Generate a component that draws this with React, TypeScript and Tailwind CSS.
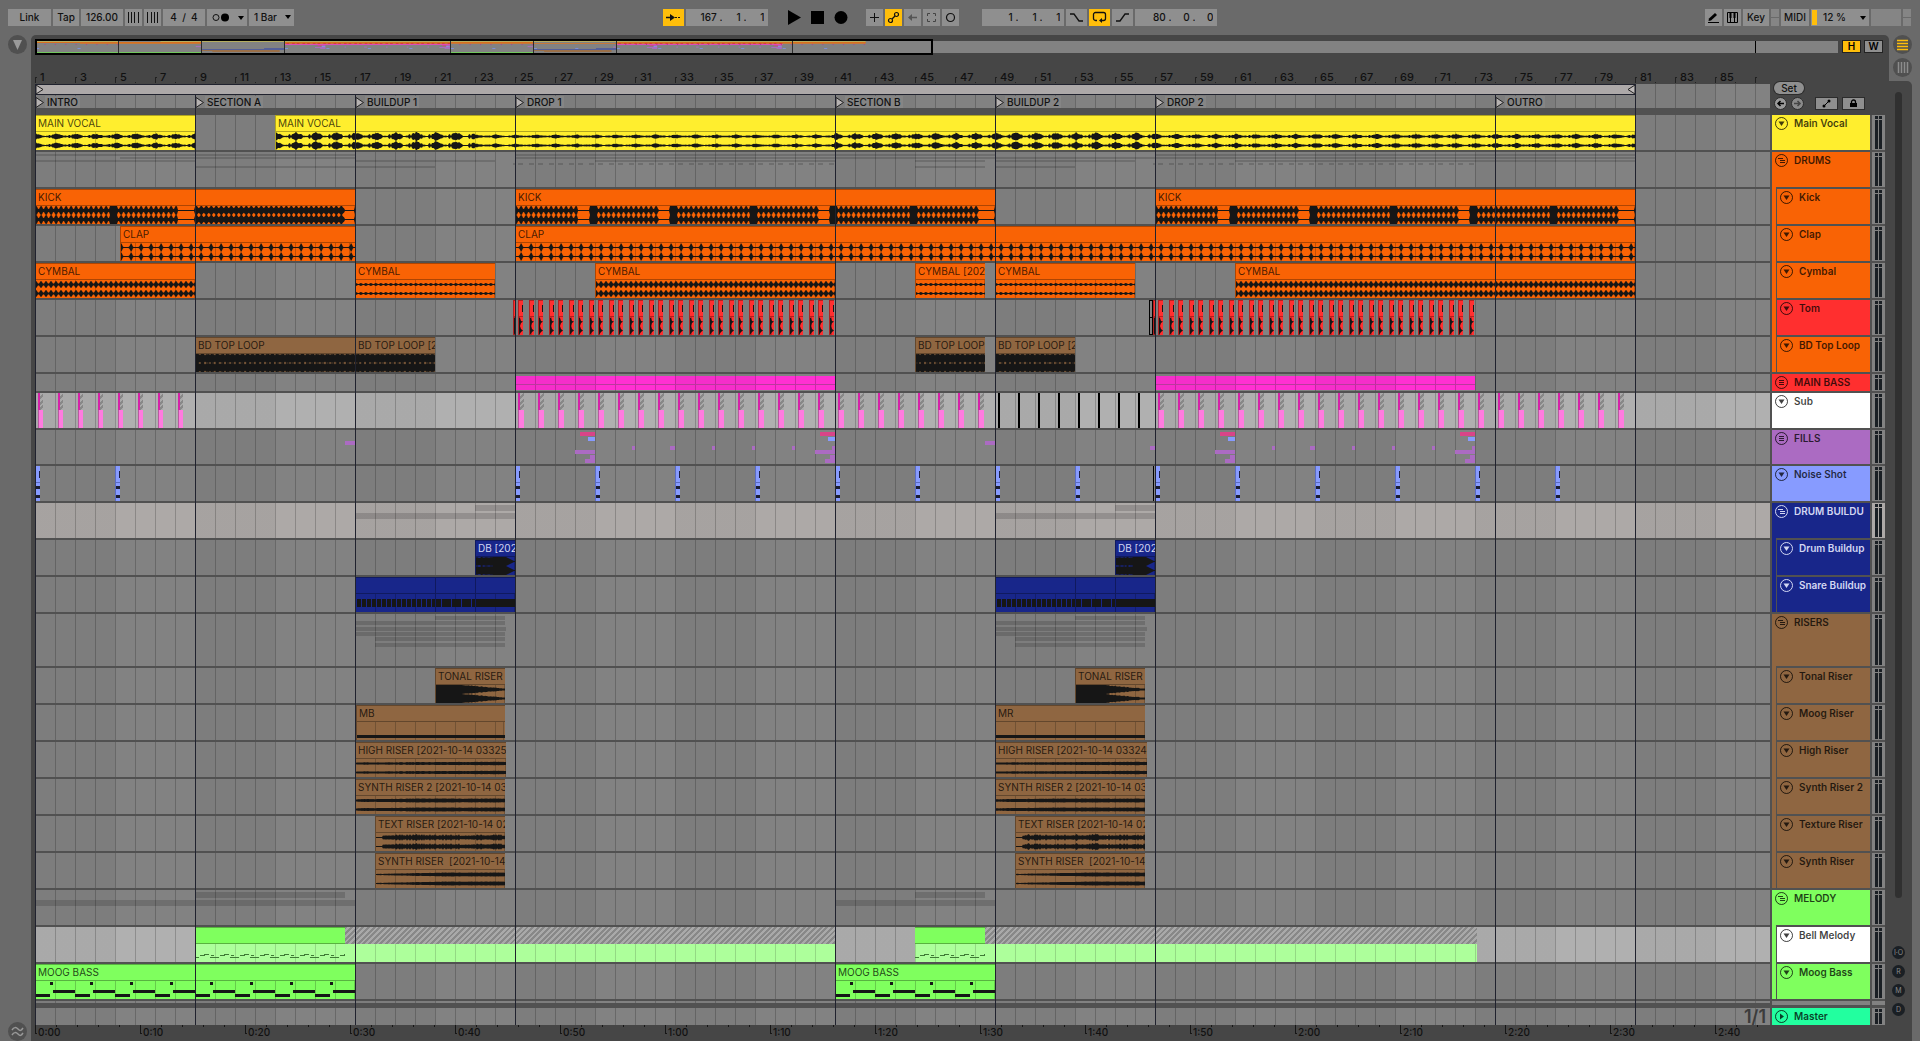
import { useState } from 'react';
import type { ReactNode } from 'react';

const BAR = 20;
const SCALE = 0.5185;

type Span = [number, number];
type WaveKind = 'vocal' | 'kick' | 'clap' | 'cymbal' | 'hat' | 'loop' | 'drop' | 'tonal' | 'high' | 'synth2' | 'texture' | 'synth';

interface ClipData {
  x: number;
  w: number;
  label?: string;
}

interface Track {
  name: string;
  height: string;
  color: string;
  lane?: string;
  text?: string;
  icon?: 'fold' | 'group' | 'flat';
  content?: ReactNode;
}

interface Section {
  head: Track;
  children?: Track[];
}

const GRID =
  'bg-[repeating-linear-gradient(90deg,rgba(0,0,0,0.2)_0_1px,transparent_1px_20px),repeating-linear-gradient(90deg,rgba(0,0,0,0.04)_0_80px,transparent_80px_160px)]';

const range = (n: number) => Array.from({ length: n }, (_, i) => i);

/* Clip positions, in pixels from bar 1 */
const vocal: ClipData[] = [
  { x: 0, w: 160, label: 'MAIN VOCAL' },
  { x: 240, w: 1360, label: 'MAIN VOCAL' }
];
const kick: ClipData[] = [
  { x: 0, w: 320, label: 'KICK' },
  { x: 480, w: 480, label: 'KICK' },
  { x: 1120, w: 480, label: 'KICK' }
];
const clap: ClipData[] = [
  { x: 85, w: 235, label: 'CLAP' },
  { x: 480, w: 1120, label: 'CLAP' }
];
const cymbal: ClipData[] = [
  { x: 0, w: 160, label: 'CYMBAL' },
  { x: 560, w: 240, label: 'CYMBAL' },
  { x: 1200, w: 400, label: 'CYMBAL' }
];
const hat: ClipData[] = [
  { x: 320, w: 140, label: 'CYMBAL' },
  { x: 880, w: 70, label: 'CYMBAL [2021' },
  { x: 960, w: 140, label: 'CYMBAL' }
];
const loops: ClipData[] = [
  { x: 160, w: 160, label: 'BD TOP LOOP' },
  { x: 320, w: 80, label: 'BD TOP LOOP [20' },
  { x: 880, w: 70, label: 'BD TOP LOOP' },
  { x: 960, w: 80, label: 'BD TOP LOOP [20' }
];
const toms: ClipData[] = [478, 1118].flatMap((start) => [
  { x: start, w: 2 },
  ...range(16).flatMap((i) => [
    { x: start + 5 + i * BAR, w: 5 },
    { x: start + 16 + i * BAR, w: 5 }
  ])
]);
const subs: ClipData[] = [
  ...range(8).map((i) => ({ x: 3 + i * BAR, w: 5 })),
  ...range(24).map((i) => ({ x: 483 + i * BAR, w: 6 })),
  ...range(24).map((i) => ({ x: 1123 + i * BAR, w: 6 }))
];
const noise = [0, 80, ...range(14).map((i) => 480 + i * 80)];

const twice = (clips: ClipData[]) => [...clips, ...clips.map((c) => ({ ...c, x: c.x + 640 }))];
const drumDrop = twice([{ x: 440, w: 40, label: 'DB [202' }]);
const snare = twice([{ x: 320, w: 160 }]);
const tonal = twice([{ x: 400, w: 70, label: 'TONAL RISER [' }]);
const moogRiser: ClipData[] = [
  { x: 321, w: 149, label: 'MB' },
  { x: 960, w: 150, label: 'MR' }
];
const high: ClipData[] = [
  { x: 320, w: 151, label: 'HIGH RISER [2021-10-14 03325' },
  { x: 960, w: 152, label: 'HIGH RISER [2021-10-14 03324' }
];
const synth2 = twice([{ x: 320, w: 150, label: 'SYNTH RISER 2 [2021-10-14 03' }]);
const texture = twice([{ x: 340, w: 130, label: 'TEXT RISER [2021-10-14 02' }]);
const synth = twice([{ x: 340, w: 130, label: 'SYNTH RISER  [2021-10-14' }]);
const bell: ClipData[] = [
  { x: 160, w: 150 },
  { x: 880, w: 70 }
];
const moog: ClipData[] = [
  { x: 0, w: 320, label: 'MOOG BASS' },
  { x: 800, w: 160, label: 'MOOG BASS' }
];

/* y, colour, x and width of every note block in the FILLS group */
const fills: [number, string, number, number][] = [
  [11, '#ab6bc2', 310, 10],
  [11, '#ab6bc2', 950, 10],
  [16, '#ab6bc2', 1115, 5],
  ...[0, 640].flatMap((o): [number, string, number, number][] => [
    [2, '#d94488', 545 + o, 15],
    [7, '#879bff', 553 + o, 7],
    [20, '#ab6bc2', 540 + o, 20],
    [25, '#ab6bc2', 555 + o, 5],
    [29, '#ab6bc2', 550 + o, 10],
    [16, '#ab6bc2', 597 + o, 3],
    [16, '#ab6bc2', 635 + o, 5],
    [16, '#ab6bc2', 677 + o, 3],
    [16, '#ab6bc2', 717 + o, 3],
    [16, '#ab6bc2', 757 + o, 3],
    [2, '#d94488', 785 + o, 15],
    [7, '#879bff', 793 + o, 7],
    [16, '#ab6bc2', 797 + o, 3],
    [20, '#ab6bc2', 780 + o, 20],
    [25, '#ab6bc2', 795 + o, 5],
    [29, '#ab6bc2', 790 + o, 10]
  ])
];

const locators = [
  { x: 0, name: 'INTRO' },
  { x: 160, name: 'SECTION A' },
  { x: 320, name: 'BUILDUP 1' },
  { x: 480, name: 'DROP 1' },
  { x: 800, name: 'SECTION B' },
  { x: 960, name: 'BUILDUP 2' },
  { x: 1120, name: 'DROP 2' },
  { x: 1460, name: 'OUTRO' }
];

const inside = (x: number, spans: Span[]) => spans.some(([a, b]) => x >= a && x < b);
const KICK_REST: Span[] = [[143, 160], [310, 320], [543, 555], [624, 635], [784, 795], [944, 960], [1183, 1195], [1264, 1275], [1424, 1435], [1584, 1600]];
const KICK_ROLL: Span[] = [[75, 83], [555, 563], [635, 643], [715, 723], [795, 803], [875, 883], [1195, 1203], [1275, 1283], [1355, 1363], [1435, 1443], [1515, 1523]];

const jitter = (x: number) => Math.abs(Math.sin(x * 12.9898) * 43758.5453) % 1;

function amplitude(kind: WaveKind, x: number, t: number) {
  switch (kind) {
    case 'vocal': {
      const p = (x + 6) % 20;
      const strength = x < 160 ? 3.2 : x < 440 ? 4.6 : x < 800 ? 2.2 : x < 960 ? 3.6 : x < 1120 ? 4.2 : 2.8;
      if (p < 2) return strength * 0.5;
      if (p < 3) return 0.6;
      if (p < 14) return Math.max(0.6, strength * (1 - Math.abs(p - 7) / 11) * (0.65 + jitter(x) * 0.4));
      return 0.5 + jitter(x) * 0.5;
    }
    case 'kick': {
      if (inside(x, KICK_REST)) return 0.5;
      if (inside(x, KICK_ROLL)) return 4.4;
      return (x >= 160 && x < 320 ? [3.8, 4.6, 4.4, 3, 2.2] : [3.6, 4.6, 4, 1.8, 1.4])[x % 5];
    }
    case 'clap':
      return [2.2, 4.5, 3, 0.7, 0.5, 0.5, 0.5, 0.5, 0.5, 0.7][(x + 5) % 10];
    case 'cymbal':
      return [1, 2.4, 3.8, 2.6, 1][(x + 1) % 5];
    case 'hat':
      return [0.5, 1.2, 1.6, 1, 0.5][(x + 1) % 5];
    case 'loop':
      return x % 10 === 0 ? 3 : x % 5 === 0 ? 3.5 : 4.2 + jitter(x) * 0.4;
    case 'drop':
      return t < 0.45 ? 3.6 + jitter(x) : t < 0.8 ? 4.6 : Math.max(0.5, (1 - t) * 20);
    case 'tonal':
      return t < 0.35 ? 4.5 : Math.max(0.9, 4.5 - (t - 0.35) * 6.5 + jitter(x) * 0.8);
    case 'high':
      return 0.8 + t * 0.7 + jitter(x) * 0.4;
    case 'synth2':
      return 1 + Math.min(t, 0.4) * 1.6 + jitter(x) * 0.4;
    case 'texture':
      return t < 0.06 ? 0.6 : 1.6 + (jitter(x) > 0.8 ? 1.6 : jitter(x + 3) * 0.8);
    default:
      return Math.min(1.7, 0.4 + t * 2.4) + jitter(x) * 0.3;
  }
}

function wavePath(kind: WaveKind, x: number, w: number) {
  return [4.5, 13.5]
    .map((mid) => {
      const amps = range(w + 1).map((i) => amplitude(kind, x + i, i / w));
      const top = amps.map((a, i) => `${i} ${(mid - a).toFixed(1)}`);
      const bottom = amps.map((a, i) => `${i} ${(mid + a).toFixed(1)}`).reverse();
      return `M${top.join('L')}L${bottom.join('L')}Z`;
    })
    .join('');
}

function Clip({ clip, color, text = 'text-black/75', children }: { clip: ClipData; color: string; text?: string; children?: ReactNode }) {
  return (
    <div
      className={`absolute inset-y-0 flex flex-col overflow-hidden border-l border-black/30 ${color}`}
      style={{ left: clip.x, width: clip.w }}
    >
      <div className={`h-[17px] shrink-0 overflow-hidden whitespace-pre border-y border-black/30 pl-[2px] text-[10px] leading-[15px] ${text}`}>
        {clip.label}
      </div>
      <div
        className="flex-1 bg-[repeating-linear-gradient(90deg,rgba(0,0,0,0.2)_0_1px,transparent_1px_20px)]"
        style={{ backgroundPositionX: -(clip.x % BAR) - 1 }}
      >
        {children}
      </div>
    </div>
  );
}

function Audio({ clips, wave, color, text }: { clips: ClipData[]; wave: WaveKind; color: string; text?: string }) {
  return (
    <>
      {clips.map((c) => (
        <Clip key={c.x} clip={c} color={color} text={text}>
          <svg width={c.w} height="18" className="-ml-px block">
            <path d={wavePath(wave, c.x, c.w)} fill="#161616" />
          </svg>
        </Clip>
      ))}
    </>
  );
}

function Toms() {
  return (
    <>
      {toms.map((c) => (
        <Clip key={c.x} clip={c} color="bg-[#ff2f2f]">
          <svg width={c.w} height="18" className="-ml-px block">
            <path d="M0 0L2 1 3 4 5 4.5 3 6 2 9 3 12 5 13.5 3 15 1 18H0z" fill="#161616" />
          </svg>
        </Clip>
      ))}
      {toms.filter((c) => c.w > 2).map((c) => (
        <div key={c.x} className="absolute top-[5px] h-[7px] w-px bg-[#161616]" style={{ left: c.x + 4 }} />
      ))}
      <div className="absolute inset-y-0 left-[1114px] w-1 border border-black">
        <div className="mt-4 h-px bg-black" />
      </div>
    </>
  );
}

function Hatch({ x, w }: { x: number; w: number }) {
  return (
    <div
      className="absolute top-0 h-[17px] bg-[repeating-linear-gradient(135deg,#888_0_2px,#a9a9a9_2px_4px)]"
      style={{ left: x, width: w }}
    />
  );
}

function Subs() {
  return (
    <>
      {subs.map((c) => (
        <div key={c.x} className="absolute inset-y-0" style={{ left: c.x, width: c.w }}>
          <Hatch x={0} w={c.w} />
          <div className="absolute left-0 top-0 h-[17px] w-[2px] bg-[#d422a8]" />
          <div className="absolute inset-x-0 bottom-0 top-[17px] border-l border-[#b85aa0] bg-[#ff7bdf]" />
        </div>
      ))}
      {range(8).map((i) => (
        <div key={i} className="absolute inset-y-0 w-[2px] bg-black" style={{ left: 963 + i * BAR }} />
      ))}
    </>
  );
}

function NoiseShots() {
  return (
    <>
      {noise.map((x) => (
        <div key={x} className="absolute inset-y-0 w-[5px] border-l border-[#5a6bc0] bg-[#879bff]" style={{ left: x }}>
          <div className="ml-[3px] mt-[5px] h-[7px] w-px bg-[#1c2040]" />
          <div className="mt-1 h-px bg-[#5a6bc0]" />
          <div className="mt-[3px] h-[3px] bg-[#1a1d30]" />
          <div className="mt-[6px] h-[3px] bg-[#1a1d30]" />
        </div>
      ))}
      <div className="absolute inset-y-0 left-[1118px] w-px bg-black" />
    </>
  );
}

function MainBass() {
  return (
    <>
      {[480, 1120].map((x) => (
        <div key={x} className="absolute bottom-px top-[2px] w-[320px] bg-[#ff30d2]" style={{ left: x }}>
          <div className={`h-full ${GRID}`} />
          <div className="absolute inset-x-0 top-[8px] h-px bg-[#b93a9c]" />
        </div>
      ))}
    </>
  );
}

function Fills() {
  return (
    <>
      {fills.map(([y, color, x, w]) => (
        <div key={`${x}-${y}`} className="absolute h-[4px]" style={{ left: x, top: y, width: w, background: color }} />
      ))}
    </>
  );
}

function Snare() {
  return (
    <>
      {snare.map((c) => (
        <Clip key={c.x} clip={c} color="bg-[#18268a]">
          <svg width="160" height="18" className="-ml-px block">
            <rect x="1" y="5" width="159" height="8" fill="#161616" />
            {range(16).map((i) => (
              <path key={i} d={`M${1 + i * 5}.5 5v8`} stroke="#18268a" />
            ))}
            {range(4).map((i) => (
              <path key={i} d={`M${86 + i * 10}.5 5v8`} stroke="#18268a" />
            ))}
          </svg>
        </Clip>
      ))}
      {[400, 440, 1040, 1080].map((x) => (
        <div key={x} className="absolute inset-y-0 w-px bg-[#10195e]" style={{ left: x }} />
      ))}
    </>
  );
}

function MoogRisers() {
  return (
    <>
      {moogRiser.map((c) => (
        <Clip key={c.x} clip={c} color="bg-[#8f6641]">
          <div className="flex h-full items-end pb-[2px]">
            <div className="h-[3px] w-full bg-[#161616]" />
          </div>
        </Clip>
      ))}
    </>
  );
}

function BellMelody() {
  return (
    <>
      <Hatch x={310} w={490} />
      <Hatch x={950} w={492} />
      {[[160, 640], [880, 562]].map(([x, w]) => (
        <div key={x} className="absolute bottom-0 top-[17px] bg-[#adff9b]" style={{ left: x, width: w }}>
          <div className="h-full bg-[repeating-linear-gradient(90deg,rgba(0,0,0,0.15)_0_1px,transparent_1px_20px)]" />
        </div>
      ))}
      {bell.map((c) => (
        <div key={c.x} className="absolute inset-y-0" style={{ left: c.x, width: c.w }}>
          <div className="h-[17px] border-y border-[#58b23f] bg-[#7fff5e]" />
          <svg width={c.w} height="18" className="block">
            {range(Math.ceil(c.w / 20)).map((i) => (
              <path key={i} d={`M${i * 20} 13.5h4m1-2h5m0-1h4m1 3h5m-11 -3h4m3 1h3`} stroke="#3f7a35" fill="none" />
            ))}
          </svg>
        </div>
      ))}
    </>
  );
}

function MoogBass() {
  return (
    <>
      {moog.map((c) => (
        <Clip key={c.x} clip={c} color="bg-[#7fff5e]">
          <svg width={c.w} height="18" className="-ml-px block" fill="#161616">
            {range(c.w / 40).map((i) => (
              <path key={i} d={`M${i * 40} 13h15v3h-15zM${i * 40 + 15} 1h3v3h-3zM${i * 40 + 18} 9h22v3h-22z`} />
            ))}
          </svg>
        </Clip>
      ))}
    </>
  );
}

/* Grey summary of the clips folded into a group lane */
function GroupBars({ rows, pitch, size }: { rows: ClipData[][]; pitch: number; size: number }) {
  return (
    <>
      {rows.map((clips, r) =>
        clips.map((c) => (
          <div
            key={`${r}-${c.x}`}
            className="absolute bg-black/15"
            style={{ left: c.x, width: c.w, top: 2 + Math.round(r * pitch), height: size }}
          />
        ))
      )}
    </>
  );
}

const ORANGE = 'bg-[#f96305]';
const BROWN = 'bg-[#8f6641]';
const NAVY = 'bg-[#18268a]';
const GREEN = 'bg-[#7fff5e]';
const NAVY_TEXT = 'text-[#d3d7f2]';
const H = 'h-[35px]';

const sections: Section[] = [
  { head: { name: 'Main Vocal', height: H, color: 'bg-[#ffee2e]', content: <Audio clips={vocal} wave="vocal" color="bg-[#ffee2e]" /> } },
  {
    head: { name: 'DRUMS', height: H, color: ORANGE, icon: 'group', content: <GroupBars rows={[kick, clap, [...cymbal, ...hat], toms, loops]} pitch={3} size={2} /> },
    children: [
      { name: 'Kick', height: H, color: ORANGE, content: <Audio clips={kick} wave="kick" color={ORANGE} /> },
      { name: 'Clap', height: H, color: ORANGE, content: <Audio clips={clap} wave="clap" color={ORANGE} /> },
      {
        name: 'Cymbal',
        height: H,
        color: ORANGE,
        content: (
          <>
            <Audio clips={cymbal} wave="cymbal" color={ORANGE} />
            <Audio clips={hat} wave="hat" color={ORANGE} />
          </>
        )
      },
      { name: 'Tom', height: H, color: 'bg-[#ff2f2f]', content: <Toms /> },
      { name: 'BD Top Loop', height: H, color: ORANGE, content: <Audio clips={loops} wave="loop" color={BROWN} /> }
    ]
  },
  { head: { name: 'MAIN BASS', height: 'h-[17px]', color: 'bg-[#ff2f2f]', icon: 'flat', content: <MainBass /> } },
  { head: { name: 'Sub', height: H, color: 'bg-white', lane: 'bg-[#b0b0b0]', content: <Subs /> } },
  { head: { name: 'FILLS', height: 'h-[34px]', color: 'bg-[#ab6bc2]', icon: 'flat', content: <Fills /> } },
  { head: { name: 'Noise Shot', height: H, color: 'bg-[#879bff]', content: <NoiseShots /> } },
  {
    head: { name: 'DRUM BUILDU', height: H, color: NAVY, lane: 'bg-[#ada9a7]', text: NAVY_TEXT, icon: 'group', content: <GroupBars rows={[drumDrop, snare]} pitch={8} size={6} /> },
    children: [
      { name: 'Drum Buildup', height: H, color: NAVY, text: NAVY_TEXT, content: <Audio clips={drumDrop} wave="drop" color={NAVY} text={NAVY_TEXT} /> },
      { name: 'Snare Buildup', height: H, color: NAVY, text: NAVY_TEXT, content: <Snare /> }
    ]
  },
  {
    head: { name: 'RISERS', height: 'h-[52px]', color: BROWN, icon: 'group', content: <GroupBars rows={[tonal, moogRiser, high, synth2, texture, synth]} pitch={5.3} size={4} /> },
    children: [
      { name: 'Tonal Riser', height: H, color: BROWN, content: <Audio clips={tonal} wave="tonal" color={BROWN} /> },
      { name: 'Moog Riser', height: H, color: BROWN, content: <MoogRisers /> },
      { name: 'High Riser', height: H, color: BROWN, content: <Audio clips={high} wave="high" color={BROWN} /> },
      { name: 'Synth Riser 2', height: H, color: BROWN, content: <Audio clips={synth2} wave="synth2" color={BROWN} /> },
      { name: 'Texture Riser', height: H, color: BROWN, content: <Audio clips={texture} wave="texture" color={BROWN} /> },
      { name: 'Synth Riser', height: H, color: BROWN, content: <Audio clips={synth} wave="synth" color={BROWN} /> }
    ]
  },
  {
    head: { name: 'MELODY', height: H, color: GREEN, icon: 'group', content: <GroupBars rows={[bell, moog]} pitch={8} size={6} /> },
    children: [
      { name: 'Bell Melody', height: H, color: 'bg-white', lane: 'bg-[#b0b0b0]', content: <BellMelody /> },
      { name: 'Moog Bass', height: H, color: GREEN, content: <MoogBass /> }
    ]
  }
];

const tracks = sections.flatMap((s) => [s.head, ...(s.children ?? [])]);

const control = 'flex h-[17px] items-center justify-center text-[10px] font-medium text-[#111]';
const OFF = 'bg-[#8f8f8f]';
const ON = 'bg-[#ffbe0a]';

function Position({ label, values }: { label: string; values: string[] }) {
  return (
    <div role="group" aria-label={label} className={`${control} ${OFF} w-[82px] pr-1`}>
      {values.map((v, i) => (
        <input
          key={i}
          aria-label={`${label} ${i + 1}`}
          defaultValue={v}
          className={`min-w-0 bg-transparent text-right outline-none ${i === 0 ? 'w-9' : i === 1 ? 'w-6' : 'w-[18px]'}`}
        />
      ))}
    </div>
  );
}

function Caret() {
  return (
    <svg width="6" height="4" className="block">
      <path d="M0 0h6L3 4z" />
    </svg>
  );
}

function TopBar() {
  const [follow, setFollow] = useState(true);
  const [loop, setLoop] = useState(true);
  const [automation, setAutomation] = useState(true);

  return (
    <header className="flex h-[35px] items-start pl-2 pr-[9px] pt-[9px]">
      <div className="flex gap-[2px]">
        <button className={`${control} ${OFF} w-[43px]`}>Link</button>
        <button className={`${control} ${OFF} w-[26px]`}>Tap</button>
        <div className={`${control} ${OFF} w-[42px]`}>
          <input aria-label="Tempo" defaultValue="126.00" className="w-full bg-transparent text-center outline-none" />
        </div>
        <button aria-label="Nudge down" className={`${control} ${OFF} w-[17px]`}>
          <svg width="13" height="11">
            <path d="M1.5 0v11M4.5 0v11M7.5 0v11M11.5 0v11" stroke="#111" />
          </svg>
        </button>
        <button aria-label="Nudge up" className={`${control} ${OFF} w-[17px]`}>
          <svg width="13" height="11">
            <path d="M1.5 0v11M5.5 0v11M8.5 0v11M11.5 0v11" stroke="#111" />
          </svg>
        </button>
        <div role="group" aria-label="Time signature" className={`${control} ${OFF} w-[42px]`}>
          <input aria-label="Numerator" defaultValue="4" className="w-[9px] bg-transparent text-center outline-none" />
          <span className="px-1">/</span>
          <input aria-label="Denominator" defaultValue="4" className="w-[9px] bg-transparent text-center outline-none" />
        </div>
        <button aria-label="Metronome" className={`${control} ${OFF} w-10 gap-2 pl-[2px]`}>
          <svg width="18" height="9">
            <circle cx="4" cy="4.5" r="3" fill="none" stroke="#111" />
            <circle cx="13" cy="4.5" r="4" fill="#000" />
          </svg>
          <Caret />
        </button>
        <div className="relative">
          <select aria-label="Quantization" className={`${control} ${OFF} w-[45px] appearance-none pl-[5px] outline-none`}>
            <option>1 Bar</option>
            <option>1/4</option>
          </select>
          <div className="pointer-events-none absolute right-[3px] top-[6px]">
            <Caret />
          </div>
        </div>
      </div>

      <div className="grow-[369]" />

      <div className="flex gap-[2px]">
        <button aria-label="Follow" onClick={() => setFollow(!follow)} className={`${control} w-[21px] ${follow ? ON : OFF}`}>
          <svg width="15" height="9">
            <path d="M0 4.5h5" stroke="#111" strokeWidth="1.5" />
            <path d="M4 1l5 3.5L4 8z" fill="#111" />
            <path d="M9 4.5h6" stroke="#111" strokeDasharray="2 1" />
          </svg>
        </button>
        <Position label="Arrangement position" values={['167 .', '1 .', '1']} />
      </div>
      <div className="ml-5 flex items-center gap-[10px]">
        <button aria-label="Play">
          <svg width="13" height="17" className="block">
            <path d="M0 1l13 7.5L0 16z" />
          </svg>
        </button>
        <button aria-label="Stop">
          <svg width="13" height="17" className="block">
            <path d="M0 2h13v13H0z" />
          </svg>
        </button>
        <button aria-label="Record">
          <svg width="14" height="17" className="block">
            <circle cx="7" cy="8.5" r="6.5" />
          </svg>
        </button>
      </div>
      <div className="ml-[18px] flex gap-[2px]">
        <button aria-label="Overdub" className={`${control} ${OFF} w-[17px]`}>
          <svg width="11" height="11">
            <path d="M5.5 1v9M1 5.5h9" stroke="#111" />
          </svg>
        </button>
        <button aria-label="Automation arm" onClick={() => setAutomation(!automation)} className={`${control} w-[17px] ${automation ? ON : OFF}`}>
          <svg width="13" height="13" fill="none" stroke="#111" strokeWidth="1.2">
            <circle cx="3.5" cy="9.5" r="2" />
            <circle cx="9.5" cy="3.5" r="2" />
            <path d="M5 8l3-3" />
          </svg>
        </button>
        <button aria-label="Re-enable automation" className={`${control} ${OFF} w-[17px]`}>
          <svg width="11" height="9">
            <path d="M4 4.5h6" stroke="#555" strokeWidth="1.5" />
            <path d="M5 1v7L1 4.5z" fill="#555" />
          </svg>
        </button>
        <button aria-label="Capture MIDI" className={`${control} ${OFF} w-[17px]`}>
          <svg width="11" height="11" fill="none" stroke="#444">
            <path d="M1.5 4V1.5H4M7 1.5h2.5V4M9.5 7v2.5H7M4 9.5H1.5V7" />
          </svg>
        </button>
        <button aria-label="Session record" className={`${control} ${OFF} w-[17px]`}>
          <svg width="11" height="11" fill="none" stroke="#111" strokeWidth="1.2">
            <circle cx="5.5" cy="5.5" r="4" />
          </svg>
        </button>
      </div>
      <div className="ml-[23px] flex gap-[2px]">
        <Position label="Loop start" values={['1 .', '1 .', '1']} />
        <button aria-label="Punch in" className={`${control} ${OFF} w-[21px]`}>
          <svg width="15" height="11" fill="none" stroke="#111" strokeWidth="1.3">
            <path d="M1 2h4l5 7h4" />
          </svg>
        </button>
        <button aria-label="Loop" onClick={() => setLoop(!loop)} className={`${control} w-[21px] ${loop ? ON : OFF}`}>
          <svg width="15" height="13" fill="none" stroke="#111" strokeWidth="1.3">
            <path d="M5 9.5H3.5a2 2 0 0 1-2-2v-4a2 2 0 0 1 2-2h8a2 2 0 0 1 2 2v4a2 2 0 0 1-2 2H9" />
            <path d="M10 7v5L7 9.5z" fill="#111" stroke="none" />
          </svg>
        </button>
        <button aria-label="Punch out" className={`${control} ${OFF} w-[21px]`}>
          <svg width="15" height="11" fill="none" stroke="#111" strokeWidth="1.3">
            <path d="M1 9h4l5-7h4" />
          </svg>
        </button>
        <Position label="Loop length" values={['80 .', '0 .', '0']} />
      </div>

      <div className="grow-[487]" />

      <div className="flex gap-[2px]">
        <button aria-label="Draw mode" className={`${control} ${OFF} w-[17px]`}>
          <svg width="13" height="13">
            <path d="M2 7.5L8 2l2 2-6 5.5-2.5.5z" />
            <path d="M1 11.5h11" stroke="#000" />
          </svg>
        </button>
        <button aria-label="Computer MIDI keyboard" className={`${control} ${OFF} w-[17px]`}>
          <svg width="13" height="13" fill="none" stroke="#000">
            <path d="M1.5 1.5h10v10h-10zM4.5 7v5M8.5 7v5" />
            <path d="M4.5 1v6M8.5 1v6" strokeWidth="2" />
          </svg>
        </button>
        <button className={`${control} ${OFF} w-[26px]`}>Key</button>
        <div className="flex w-2 flex-col gap-px">
          <div className="h-2 bg-[#858585]" />
          <div className="h-2 bg-[#858585]" />
        </div>
        <button className={`${control} ${OFF} w-[28px]`}>MIDI</button>
        <button aria-label="CPU load" className={`${control} ${OFF} w-[58px] px-px`}>
          <span className="h-[15px] w-[5px] shrink-0 bg-[#ffbe0a]" />
          <span className="flex-1 pl-[6px] text-left">12 %</span>
          <span className="pr-[2px]">
            <Caret />
          </span>
        </button>
        <div className="h-[17px] w-[30px] bg-[#858585]" />
        <div className="flex w-2 flex-col gap-px">
          <div className="h-2 bg-[#858585]" />
          <div className="h-2 bg-[#858585]" />
        </div>
      </div>
    </header>
  );
}

/* Miniature of the arrangement above the ruler */
function Overview() {
  const rows: [ClipData[], number, string][] = [
    [vocal, 0, '#b5ad60'],
    [kick, 1, '#d8701f'],
    [clap, 2, '#c77838'],
    [cymbal, 1, '#d8701f'],
    [toms, 2, '#d63c3c'],
    [[{ x: 480, w: 320 }, { x: 1120, w: 320 }], 3, '#dd4cb8'],
    [noise.map((x) => ({ x, w: 6 })), 7, '#7f8fd8'],
    [snare, 8, '#55609a'],
    [drumDrop, 7, '#55609a'],
    [synth2, 9, '#9a6f48'],
    [texture, 10, '#9a6f48'],
    [moog, 11, '#72c75e'],
    [[{ x: 160, w: 150 }, { x: 880, w: 70 }], 11, '#72c75e']
  ];

  return (
    <svg width="896" height="12" className="absolute left-0 top-0">
      {rows.map(([clips, y, color], r) =>
        clips.map((c) => <rect key={`${r}-${c.x}`} x={c.x * SCALE + 1} y={y} width={c.w * SCALE} height="1" fill={color} />)
      )}
      {subs.filter((_, i) => i < 8 || i > 23).map((c) => (
        <rect key={c.x} x={c.x * SCALE + 8} y="3" width="1" height="1" fill="#b83a92" />
      ))}
      {fills.map(([y, color, x, w]) => (
        <rect key={`${x}-${y}`} x={x * SCALE} y={4 + y / 10} width={w * SCALE} height="1" fill={color} />
      ))}
      {locators.slice(1).map((l) => (
        <rect key={l.x} x={Math.round(l.x * SCALE)} y="0" width="1" height="12" fill="#2c2c2c" />
      ))}
    </svg>
  );
}

function Ruler() {
  return (
    <div className="flex h-[29px] items-end overflow-hidden">
      {range(44).map((i) => (
        <div key={i} className="relative flex h-3 w-10 shrink-0 text-[11px] font-medium leading-[10px] text-[#111]">
          <div className="mt-[5px] h-[6px] w-[2px] border-l border-t border-[#222]" />
          {i < 43 && <span className="pl-[3px]">{i * 2 + 1}</span>}
          <div className="absolute bottom-px left-5 h-px w-px bg-[#222]" />
        </div>
      ))}
    </div>
  );
}

function LoopAndLocators() {
  return (
    <div className={`relative h-6 overflow-hidden bg-[#828282] ${GRID}`}>
      <div className="flex h-[11px] w-[1601px] items-center justify-between border-y border-[#20222e] bg-[#ada9a9]">
        <svg width="9" height="9">
          <path d="M1 0l7 4.5L1 9z" fill="#bdb9b9" stroke="#222" />
        </svg>
        <svg width="10" height="9">
          <path d="M9 0L2 4.5 9 9z" fill="#bdb9b9" stroke="#222" />
        </svg>
      </div>
      {locators.map((l) => (
        <div key={l.x} className="absolute bottom-0 flex h-[12px] items-center text-[10px] font-medium leading-[12px] text-[#111]" style={{ left: l.x }}>
          <svg width="10" height="11">
            <path d="M1 .5l7.5 5-7.5 5z" fill="#b5b1b1" stroke="#222" />
          </svg>
          <span className="bg-[#858585] px-[2px]">{l.name}</span>
        </div>
      ))}
    </div>
  );
}

function TimeRuler() {
  return (
    <div className="flex h-4 overflow-hidden bg-[#464646]">
      {range(17).map((i) => (
        <div key={i} className="flex h-4 w-[105px] shrink-0 bg-[repeating-linear-gradient(90deg,#161616_0_1px,transparent_1px_21px)] bg-[length:105px_2px] bg-no-repeat">
          <div className="h-[9px] w-[2px] border-b border-l border-[#161616]" />
          <span className="pl-px text-[10px] font-medium leading-[15px] text-[#111]">
            {Math.floor(i / 6)}:{i % 6}0
          </span>
        </div>
      ))}
    </div>
  );
}

function Timeline() {
  return (
    <div className="min-w-0 flex-1">
      <Ruler />
      <div className="relative overflow-hidden bg-[#515151]">
        <LoopAndLocators />
        <div className="flex flex-col gap-[2px] pt-[7px]">
          {tracks.map((t) => (
            <div key={t.name} className={`relative overflow-hidden ${t.height} ${t.lane ?? 'bg-[#828282]'} ${GRID}`}>
              {t.content}
            </div>
          ))}
          <div className={`h-[2px] bg-[#828282] ${GRID}`} />
        </div>
        <div className={`mt-[5px] flex h-[17px] items-center justify-end bg-[#828282] pr-1 text-[18px] font-semibold leading-[17px] text-[#3c3c3c] ${GRID}`}>
          1/1
        </div>
        {[...locators.map((l) => l.x), 1600].map((x) => (
          <div key={x} className={`absolute bottom-0 w-px bg-[#20222e] ${x === 0 || x === 1600 ? 'top-0' : 'top-[11px]'}`} style={{ left: x }} />
        ))}
      </div>
      <TimeRuler />
    </div>
  );
}

function TrackIcon({ type }: { type: 'fold' | 'group' | 'flat' | 'play' }) {
  return (
    <svg width="13" height="13" fill="none" stroke="currentColor" className="block">
      <circle cx="6.5" cy="6.5" r="6" />
      {type === 'fold' && <path d="M3.5 4.5h6l-3 4.5z" fill="currentColor" stroke="none" />}
      {type === 'play' && <path d="M5 3.5v6l4-3z" fill="currentColor" stroke="none" />}
      {type === 'group' && <path d="M3 4.5h5M5 6.5h5M5 8.5h5" />}
      {type === 'flat' && <path d="M4 4.5h5M4 6.5h5M4 8.5h5" />}
    </svg>
  );
}

function TrackHeader({ track, type }: { track: Track; type?: 'play' }) {
  return (
    <div className={`flex items-start gap-[6px] overflow-hidden pl-[3px] pt-[2px] ${track.height} ${track.color} ${track.text ?? 'text-black/75'}`}>
      <button aria-label={`Fold ${track.name}`} className="shrink-0">
        <TrackIcon type={type ?? track.icon ?? 'fold'} />
      </button>
      <span className="whitespace-nowrap text-[10px] font-semibold leading-[13px]">{track.name}</span>
    </div>
  );
}

function Meter({ height, light }: { height: string; light?: boolean }) {
  return (
    <div className={`flex justify-center gap-px py-px ${height} ${light ? 'bg-[#ada9a7]' : 'bg-[#828282]'}`}>
      {[0, 1].map((i) => (
        <div key={i} className="flex w-[3px] flex-col gap-px">
          <div className="h-[3px] bg-[#1a1f24]" />
          <div className="flex-1 bg-[#1a1f24]" />
        </div>
      ))}
    </div>
  );
}

function HeaderColumn() {
  return (
    <aside className="w-[119px] shrink-0 pr-1">
      <div className="flex h-[60px] flex-col gap-[3px] pl-1 pt-[27px]">
        <button className="h-3 w-[30px] rounded-full bg-[#8f8f8f] text-[10px] font-medium leading-[12px] text-[#111] ring-1 ring-[#2c2c2c]">Set</button>
        <div className="flex items-center">
          <button aria-label="Previous locator" className="flex h-[13px] w-[13px] items-center justify-center rounded-full border border-[#2c2c2c] bg-[#9a9a9a]">
            <svg width="9" height="7" className="shrink-0" fill="none" stroke="#000" strokeWidth="1.5">
              <path d="M8 3.5H2M4.5 1L2 3.5 4.5 6" />
            </svg>
          </button>
          <button aria-label="Next locator" className="ml-1 flex h-[13px] w-[13px] items-center justify-center rounded-full border border-[#2c2c2c] bg-[#8a8a8a]">
            <svg width="9" height="7" className="shrink-0" fill="none" stroke="#444" strokeWidth="1.5">
              <path d="M1 3.5h6M4.5 1L7 3.5 4.5 6" />
            </svg>
          </button>
          <button aria-label="Automation mode" className="ml-[11px] flex h-[13px] w-[23px] items-center justify-center border border-[#2c2c2c] bg-[#8f8f8f]">
            <svg width="9" height="9">
              <path d="M2 7l5-5" stroke="#000" />
              <circle cx="2" cy="7" r="1.5" />
              <circle cx="7" cy="2" r="1.5" />
            </svg>
          </button>
          <button aria-label="Lock envelopes" className="ml-1 flex h-[13px] w-[23px] items-center justify-center border border-[#2c2c2c] bg-[#8f8f8f]">
            <svg width="9" height="9">
              <path d="M1 4h7v4H1z" />
              <path d="M2.5 4V3a2 2 0 0 1 4 0v1" fill="none" stroke="#000" strokeWidth="1.3" />
            </svg>
          </button>
        </div>
      </div>
      <div className="flex gap-[2px] bg-[#515151] pl-[2px]">
        <div className="flex w-[98px] flex-col gap-[2px]">
          {sections.map(({ head, children }) => (
            <div key={head.name} className={head.color}>
              <TrackHeader track={head} />
              {children && (
                <div className="ml-1 flex flex-col gap-[2px] bg-[#515151] pl-px pt-[2px]">
                  {children.map((c) => (
                    <TrackHeader key={c.name} track={c} />
                  ))}
                </div>
              )}
            </div>
          ))}
          <div className="h-1 bg-[#828282]" />
          <div className="pt-px">
            <TrackHeader track={{ name: 'Master', height: 'h-[17px]', color: 'bg-[#22ff9f]' }} type="play" />
          </div>
        </div>
        <div className="flex w-[13px] flex-col gap-[2px]">
          {tracks.map((t) => (
            <Meter key={t.name} height={t.height} light={t.name === 'DRUM BUILDU'} />
          ))}
          <div className="h-1 bg-[#828282]" />
          <div className="pt-px">
            <Meter height="h-[17px]" />
          </div>
        </div>
      </div>
    </aside>
  );
}

const round = 'flex h-[19px] w-[19px] items-center justify-center rounded-full bg-[#505050]';

export default function App() {
  return (
    <div className="flex min-h-screen flex-col overflow-hidden bg-[#6a6a6a] font-['Inter',sans-serif]">
      <TopBar />
      <div className="flex flex-1">
        <div className="flex w-[31px] shrink-0 flex-col justify-between pl-2">
          <button aria-label="Show browser" className={round}>
            <svg width="11" height="12">
              <path d="M1 1h9L5.5 11z" fill="#9a9a9a" />
            </svg>
          </button>
          <button aria-label="Groove pool" className={round}>
            <svg width="13" height="11" fill="none" stroke="#999" strokeWidth="1.5">
              <path d="M1 4c2-3 4-3 6-1s3 2 5-1M1 9c2-3 4-3 6-1s3 2 5-1" />
            </svg>
          </button>
        </div>

        <div className="min-w-0 flex-1 rounded-t-[5px] bg-[#464646] pl-1 pt-[6px]">
          <div className="flex h-[14px] items-start pr-[6px]">
            <div className="relative h-3 flex-1 bg-[#828282]">
              <Overview />
              <div className="absolute -top-[2px] left-0 h-4 w-[898px] border-2 border-black" />
              <div className="absolute inset-y-0 right-[82px] w-px bg-black" />
            </div>
            <div className="-mt-px ml-1 flex gap-[3px]">
              <button className="h-[13px] w-[19px] border border-[#222] bg-[#ffbe0a] text-[10px] font-semibold leading-[11px]">H</button>
              <button className="h-[13px] w-[19px] border border-[#222] bg-[#8f8f8f] text-[10px] font-semibold leading-[11px]">W</button>
            </div>
          </div>
          <div className="flex">
            <Timeline />
            <HeaderColumn />
          </div>
        </div>

        <div className="flex w-[31px] shrink-0 flex-col">
          <div className="flex h-[46px] flex-col items-start gap-1 pl-1">
            <button aria-label="Arrangement view" className={round}>
              <svg width="11" height="12">
                <path d="M0 1.5h11M0 4.5h11M0 7.5h11M0 10.5h11" stroke="#ffbe0a" strokeWidth="1.5" />
              </svg>
            </button>
            <button aria-label="Session view" className={round}>
              <svg width="12" height="11">
                <path d="M1.5 0v11M4.5 0v11M7.5 0v11M10.5 0v11" stroke="#8c8c8c" strokeWidth="1.5" />
              </svg>
            </button>
          </div>
          <div className="flex w-[23px] flex-1 flex-col gap-[6px] rounded-tr-[5px] bg-[#464646] pb-[25px] pt-[11px]">
            <div className="mb-[42px] ml-[6px] w-[7px] flex-1 rounded-full bg-[#303030]" />
            {['I·O', 'R', 'M', 'D'].map((s) => (
              <button key={s} className="ml-[3px] flex h-[13px] w-[13px] items-center justify-center rounded-full bg-[#1a1f24] text-[7px] leading-[13px] text-[#8a8a8a]">
                {s}
              </button>
            ))}
          </div>
        </div>
      </div>
    </div>
  );
}
